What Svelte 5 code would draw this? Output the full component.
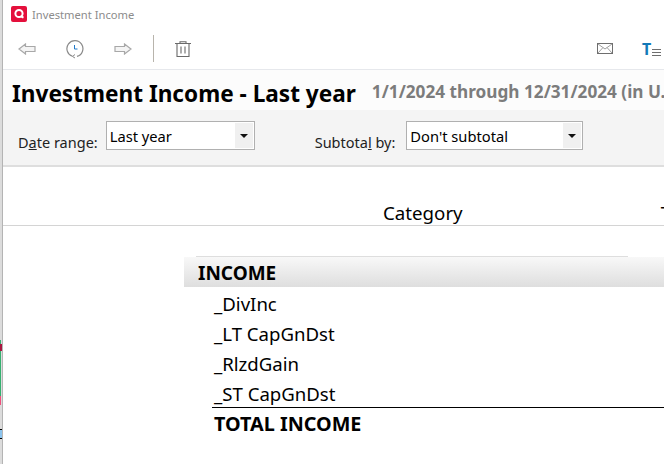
<script>
  const rows = ['_DivInc', '_LT CapGnDst', '_RlzdGain', '_ST CapGnDst'];
</script>

<div class="page">
  <div class="strip">
    <div class="green"><div class="dot"></div></div>
    <div class="pink"></div>
    <div class="blue"></div>
  </div>

  <div class="win">
    <div class="titlebar">
      <svg class="logo" width="16" height="16" viewBox="0 0 16 16">
        <rect x="0" y="0" width="16" height="16" rx="2" fill="#e4103c" />
        <circle cx="8" cy="7.5" r="3.6" fill="none" stroke="#fff" stroke-width="2" />
        <path d="M9.5 10l3 1.6" stroke="#fff" stroke-width="2" />
      </svg>
      <span>Investment Income</span>
    </div>

    <div class="toolbar">
      <svg class="back" width="18" height="12" viewBox="0 0 18 12">
        <path d="M7.5 1L1 6l6.500 5V8.500h9.500v-5H7.500z" fill="#f4f4f4" stroke="#a8a8a8" stroke-width="1.200" />
      </svg>
      <svg class="hist" width="18" height="20" viewBox="0 0 18 20">
        <path d="M6.500 17.300A8 8 0 1 1 11 17.400" fill="none" stroke="#8a8a8a" stroke-width="1.200" />
        <path d="M9 15.500l-2.500 2 2.500 1.500" fill="none" stroke="#8a8a8a" stroke-width="1" />
        <path d="M8.500 6v4h3" fill="none" stroke="#1f78c8" stroke-width="1" />
      </svg>
      <svg class="fwd" width="18" height="12" viewBox="0 0 18 12">
        <path d="M10.500 1L17 6l-6.500 5V8.500H1v-5h9.500z" fill="#f4f4f4" stroke="#a8a8a8" stroke-width="1.200" />
      </svg>
      <div class="sep"></div>
      <svg class="trash" width="16" height="16" viewBox="0 0 16 16">
        <path d="M0 2.500h16M5 2.500V.7h6v1.800M2 2.500V15.500h12V2.500M6 5.500v7M10 5.500v7" fill="none" stroke="#6a6a6a" stroke-width="1.100" />
      </svg>
      <div class="grow"></div>
      <svg class="mail" width="16" height="11" viewBox="0 0 16 11">
        <rect x="0.500" y="0.500" width="15" height="10" fill="#fff" stroke="#6e6e6e" />
        <path d="M1 1l7 5 7-5M1 10l5-5.500M15 10l-5-5.500" fill="none" stroke="#a0a0a0" />
      </svg>
      <div class="fonts">
        <span class="tee">T</span>
        <svg width="9" height="8" viewBox="0 0 9 8">
          <path d="M0 .5h9M0 3.500h9M0 6.500h9" stroke="#6e6e6e" />
        </svg>
      </div>
    </div>

    <div class="heading">
      <h1>Investment Income - Last year</h1>
      <span class="dates">1/1/2024 through 12/31/2024 (in U.S. Dollars)</span>
    </div>

    <div class="filters">
      <div class="date-filter">
        <span class="lbl">D<u>a</u>te range:</span>
        <div class="combo short"><span>Last year</span><i><b></b></i></div>
      </div>
      <div class="sub-filter">
        <span class="lbl">Subtota<u>l</u> by:</span>
        <div class="combo long"><span>Don't subtotal</span><i><b></b></i></div>
      </div>
    </div>

    <div class="colhead">
      <span class="cat">Category</span>
      <span class="tot">Total</span>
    </div>

    <div class="report">
      <div class="group">
        <div class="topline"></div>
        <div class="income">INCOME</div>
      </div>
      {#each rows as r}
        <div class="row">{r}</div>
      {/each}
      <div class="total">TOTAL INCOME</div>
    </div>
  </div>
</div>

<style>
  :global(body) {
    margin: 0;
    overflow: hidden;
    background: #fff;
  }
  .page {
    display: flex;
    width: 664px;
    height: 464px;
    overflow: hidden;
    font-family: "Noto Sans", "Open Sans", sans-serif;
    color: #000;
  }
  .strip {
    width: 2px;
    height: 464px;
    flex: none;
    border-right: 1px solid #b4b4b4;
    background: #dcdcdc;
  }
  .green {
    position: relative;
    width: 1px;
    height: 56px;
    margin-top: 340px;
    background: #35b070;
  }
  .dot {
    position: absolute;
    top: 4px;
    left: 0;
    width: 2px;
    height: 7px;
    background: #a81840;
  }
  .pink {
    width: 1px;
    height: 9px;
    background: #f0507c;
  }
  .blue {
    height: 8px;
    margin-top: 24px;
    border-top: 1px solid #000;
    border-bottom: 1px solid #000;
    background: #8cc4ee;
  }
  .win {
    flex: 1;
    min-width: 0;
  }
  .titlebar {
    display: flex;
    align-items: center;
    gap: 5px;
    height: 28px;
    padding-left: 8px;
    font-size: 11.2px;
    color: #8c8c8c;
  }
  .toolbar {
    display: flex;
    align-items: center;
    height: 42px;
    padding-left: 15px;
    border-bottom: 1px solid #e6e8ec;
    box-sizing: border-box;
  }
  .hist { margin-left: 30px; }
  .fwd { margin-left: 30px; }
  .sep {
    width: 1px;
    height: 27px;
    margin-left: 21px;
    background: #b8b4ac;
  }
  .trash { margin-left: 21px; }
  .grow { flex: 1; }
  .mail { margin-right: 29px; }
  .fonts {
    display: flex;
    align-items: flex-end;
    width: 22px;
  }
  .tee {
    font-size: 16px;
    line-height: 18px;
    font-weight: 700;
    color: #1479b8;
  }
  .fonts svg { margin-bottom: 1px; margin-left: 1px; }
  .heading {
    display: flex;
    align-items: flex-start;
    gap: 16px;
    height: 40px;
    padding-left: 9px;
    background: #fcfcfc;
    white-space: nowrap;
    overflow: hidden;
  }
  h1 {
    margin: 0;
    font-size: 22.6px;
    line-height: 48px;
    font-weight: 700;
  }
  .dates {
    font-size: 17.2px;
    line-height: 44px;
    font-weight: 700;
    color: #7c7c7c;
  }
  .filters {
    display: flex;
    height: 57px;
    padding-top: 11px;
    background: #f4f4f4;
    border-bottom: 2px solid #dedede;
    box-sizing: border-box;
  }
  .date-filter, .sub-filter {
    display: flex;
    align-items: flex-start;
  }
  .date-filter { margin-left: 15px; gap: 8px; }
  .sub-filter { margin-left: 60px; gap: 11px; }
  .lbl {
    margin-top: 11px;
    font-size: 14.5px;
    line-height: 20px;
    color: #222;
  }
  .combo {
    display: flex;
    height: 29px;
    box-sizing: border-box;
    border: 1px solid #b0b0b0;
    background: #fff;
    font-size: 14.7px;
    line-height: 28px;
    padding-left: 3px;
  }
  .combo span { flex: 1; }
  .combo i {
    display: flex;
    align-items: center;
    justify-content: center;
    width: 18px;
    height: 25px;
    margin: 1px;
    background: #f0f0f0;
  }
  .combo b {
    border: 4px solid transparent;
    border-top-color: #111;
    border-bottom: 0;
  }
  .short { width: 149px; }
  .long { width: 177px; }
  .colhead {
    display: flex;
    height: 59px;
    box-sizing: border-box;
    border-bottom: 1px solid #d4d4d4;
    padding-top: 34px;
    font-size: 18.7px;
    line-height: 24px;
    white-space: nowrap;
    overflow: hidden;
  }
  .cat { margin-left: 380px; }
  .tot { margin-left: 198px; }
  .report {
    padding: 30px 0 0 181px;
  }
  .topline {
    height: 1px;
    margin-left: 12px;
    margin-right: 36px;
    background: #dedede;
  }
  .income {
    height: 30px;
    padding-left: 14px;
    background: linear-gradient(#f8f8f8, #dedede);
    font-size: 19px;
    line-height: 32px;
    font-weight: 700;
  }
  .row {
    height: 30px;
    padding-left: 30px;
    font-size: 18.6px;
    line-height: 34px;
  }
  .total {
    height: 30px;
    margin-left: 28px;
    padding-left: 2px;
    border-top: 1px solid #000;
    font-size: 19.8px;
    line-height: 32px;
    font-weight: 700;
  }
</style>
